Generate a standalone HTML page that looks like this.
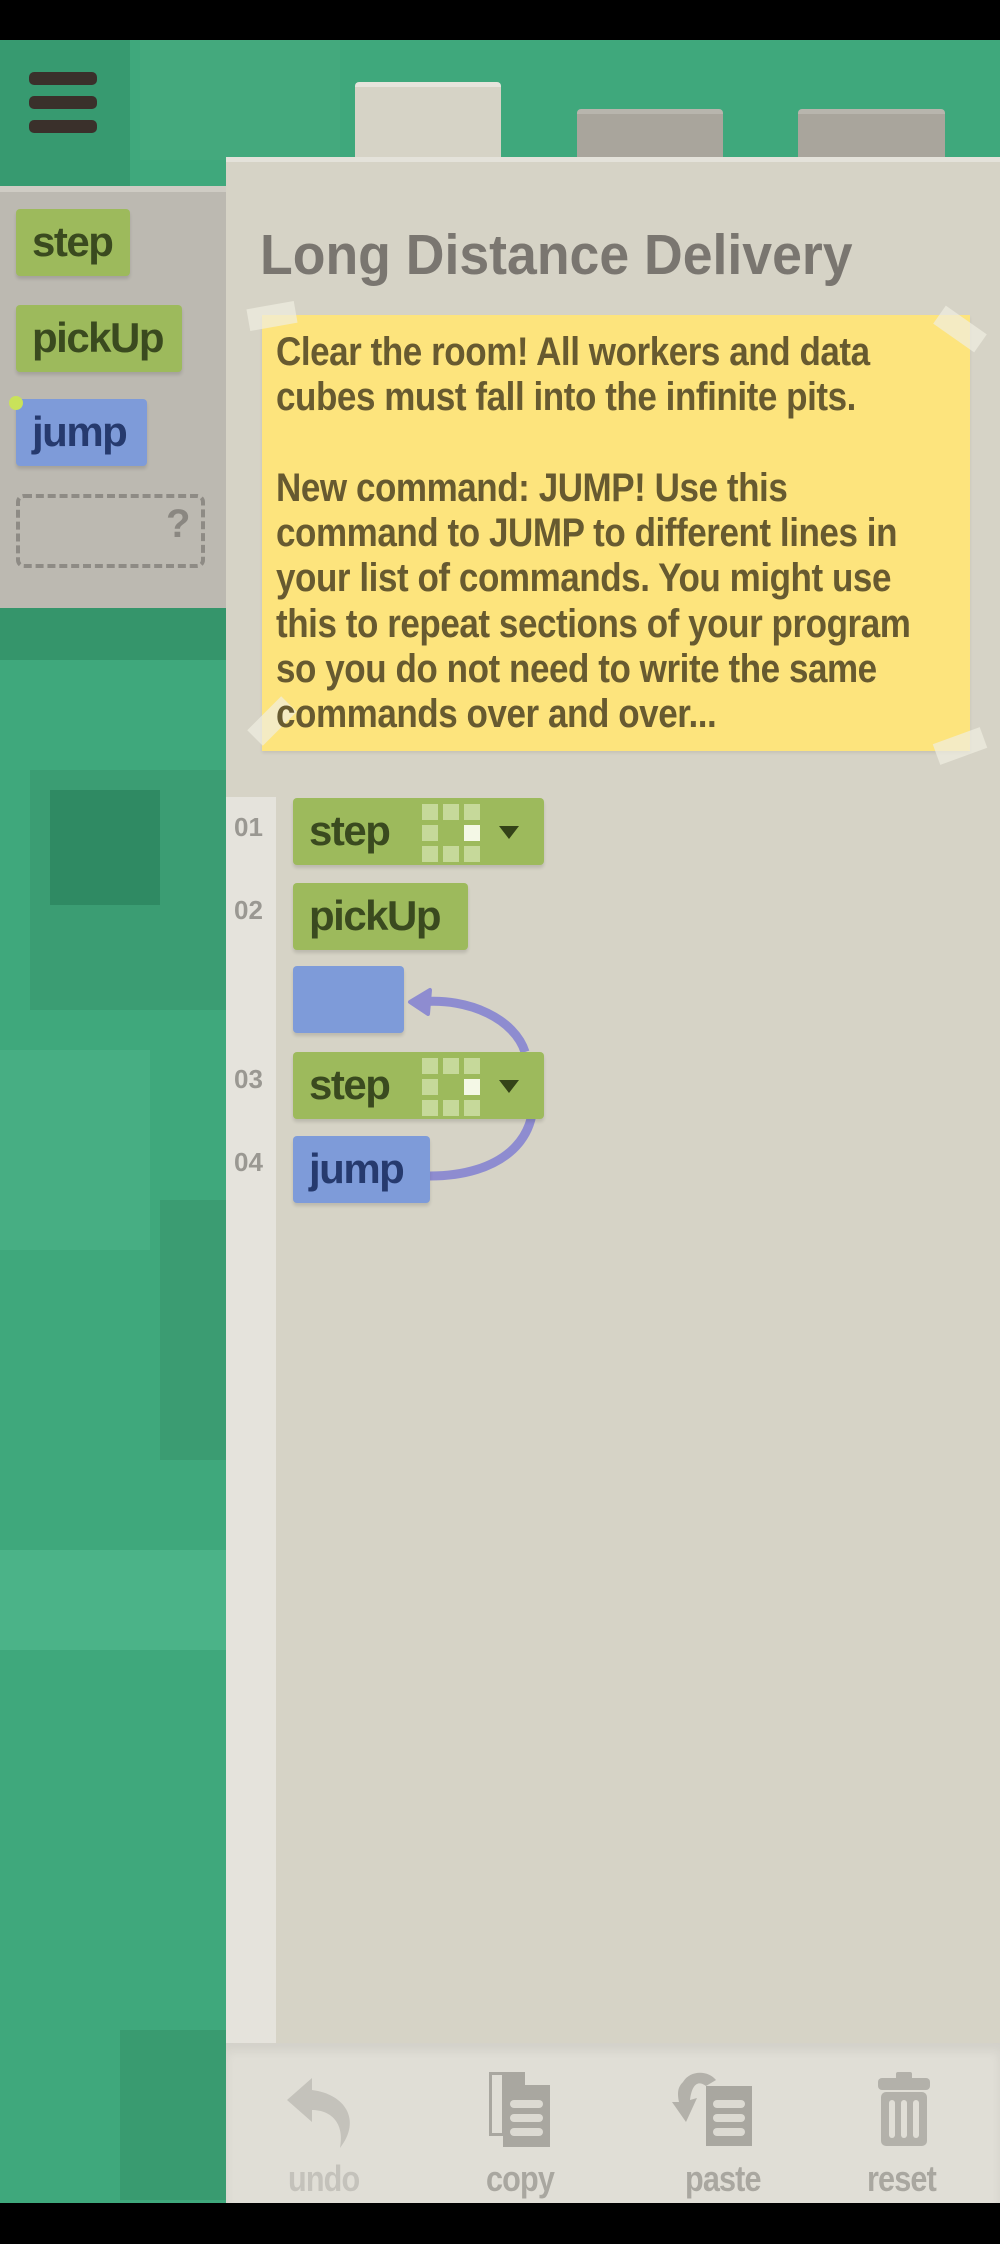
<!DOCTYPE html>
<html><head><meta charset="utf-8"><style>
*{margin:0;padding:0;box-sizing:border-box}
body{width:1000px;height:2244px;position:relative;overflow:hidden;background:#3fa87c;font-family:"Liberation Sans",sans-serif}
.a{position:absolute}
.blk{position:absolute;height:67px;border-radius:4px;font-weight:bold;font-size:42px;line-height:66px;padding-left:16px;letter-spacing:-1.5px;box-shadow:0 3px 3px rgba(0,0,0,.12)}
.g{background:#9dba5c;color:#3a4a1f}
.b{background:#7e9bd9;color:#263a6e}
.num{position:absolute;left:234px;font-size:26px;font-weight:bold;color:#9a9892}
.note{font-weight:bold;font-size:40px;color:#675a30;line-height:45.3px;white-space:nowrap;letter-spacing:-0.5px;transform:scaleX(0.875);transform-origin:0 0}
.lbl{position:absolute;top:2158px;font-size:36px;font-weight:bold;color:#a9a7a0;letter-spacing:-1px;transform:scaleX(0.85);transform-origin:0 0}
</style></head><body>
<div class="a" style="left:0;top:40px;width:130px;height:230px;background:#379a70"></div>
<div class="a" style="left:140px;top:40px;width:200px;height:120px;background:#44a97d"></div>
<div class="a" style="left:0;top:600px;width:230px;height:60px;background:#35956b"></div>
<div class="a" style="left:30px;top:770px;width:200px;height:240px;background:#3b9d73"></div>
<div class="a" style="left:50px;top:790px;width:110px;height:115px;background:#2f8a63"></div>
<div class="a" style="left:0;top:1050px;width:150px;height:200px;background:#47ae83"></div>
<div class="a" style="left:160px;top:1200px;width:70px;height:260px;background:#3b9c72"></div>
<div class="a" style="left:0;top:1550px;width:230px;height:100px;background:#4bb388"></div>
<div class="a" style="left:120px;top:2030px;width:110px;height:170px;background:#399b70"></div>
<div class="a" style="left:0;top:0;width:1000px;height:40px;background:#000"></div>
<div class="a" style="left:0;top:2203px;width:1000px;height:41px;background:#000"></div>
<div class="a" style="left:29px;top:72px;width:68px;height:13px;border-radius:5px;background:#3a302b"></div>
<div class="a" style="left:29px;top:96px;width:68px;height:13px;border-radius:5px;background:#3a302b"></div>
<div class="a" style="left:29px;top:120px;width:68px;height:13px;border-radius:5px;background:#3a302b"></div>
<div class="a" style="left:355px;top:82px;width:146px;height:80px;background:#d6d3c6;border-top:5px solid #e6e4dc;border-radius:4px 4px 0 0"></div>
<div class="a" style="left:577px;top:109px;width:146px;height:50px;background:#a9a59c;border-top:5px solid #b8b5ad;border-radius:4px 4px 0 0"></div>
<div class="a" style="left:798px;top:109px;width:147px;height:50px;background:#a9a59c;border-top:5px solid #b8b5ad;border-radius:4px 4px 0 0"></div>
<div class="a" style="left:0;top:186px;width:226px;height:422px;background:#bcb9b1;border-top:6px solid #cfccc4"></div>
<div class="blk g" style="left:16px;top:209px;width:114px">step</div>
<div class="blk g" style="left:16px;top:305px;width:166px">pickUp</div>
<div class="blk b" style="left:16px;top:399px;width:131px">jump</div>
<div class="a" style="left:9px;top:396px;width:14px;height:14px;border-radius:50%;background:#c9e25a"></div>
<div class="a" style="left:16px;top:494px;width:189px;height:74px;border:4px dashed #8e8b85;border-radius:8px"></div>
<div class="a" style="left:166px;top:502px;font-size:40px;font-weight:bold;color:#8a8781">?</div>
<div class="a" style="left:226px;top:157px;width:774px;height:2046px;background:#d6d3c6;border-top:5px solid #e4e2da"></div>
<div class="a" style="left:260px;top:222px;font-size:57px;font-weight:bold;color:#7a7670;white-space:nowrap;transform:scaleX(0.94);transform-origin:0 0">Long Distance Delivery</div>
<div class="a" style="left:262px;top:315px;width:708px;height:436px;background:#fde47d;box-shadow:0 2px 3px rgba(0,0,0,.08)"></div>
<div class="a" style="left:248px;top:305px;width:48px;height:22px;background:rgba(240,238,225,.7);transform:rotate(-10deg)"></div>
<div class="a" style="left:935px;top:318px;width:50px;height:22px;background:rgba(240,238,225,.7);transform:rotate(35deg)"></div>
<div class="a" style="left:248px;top:710px;width:48px;height:22px;background:rgba(240,238,225,.7);transform:rotate(-45deg)"></div>
<div class="a" style="left:935px;top:735px;width:50px;height:22px;background:rgba(240,238,225,.7);transform:rotate(-20deg)"></div>
<div class="a note" style="left:276px;top:330px">Clear the room! All workers and data<br>cubes must fall into the infinite pits.<br><br>New command: JUMP! Use this<br>command to JUMP to different lines in<br>your list of commands. You might use<br>this to repeat sections of your program<br>so you do not need to write the same<br>commands over and over...</div>
<div class="a" style="left:226px;top:797px;width:50px;height:1246px;background:#e5e3dc"></div>
<div class="num" style="top:812px">01</div>
<div class="num" style="top:895px">02</div>
<div class="num" style="top:1064px">03</div>
<div class="num" style="top:1147px">04</div>
<svg class="a" style="left:0;top:0" width="1000" height="2244">
<path d="M430 1176 C500 1176 540 1140 532 1090" fill="none" stroke="#8e8cd0" stroke-width="9"/>
<path d="M525 1052 C515 1020 470 997 420 1002" fill="none" stroke="#8e8cd0" stroke-width="9"/>
<path d="M410 1002 L430 990 L428 1014 Z" fill="#8e8cd0" stroke="#8e8cd0" stroke-width="4" stroke-linejoin="round"/>
</svg>
<div class="blk g" style="left:293px;top:798px;width:251px">step</div>
<div class="blk g" style="left:293px;top:883px;width:175px">pickUp</div>
<div class="blk b" style="left:293px;top:966px;width:111px"></div>
<div class="blk g" style="left:293px;top:1052px;width:251px">step</div>
<div class="blk b" style="left:293px;top:1136px;width:137px">jump</div>
<svg class="a" style="left:420px;top:802px" width="100" height="60">
<g fill="#c6d99a"><rect x="2" y="2" width="16" height="16"/><rect x="23" y="2" width="16" height="16"/><rect x="44" y="2" width="16" height="16"/><rect x="2" y="23" width="16" height="16"/><rect x="2" y="44" width="16" height="16"/><rect x="23" y="44" width="16" height="16"/><rect x="44" y="44" width="16" height="16"/></g>
<rect x="44" y="23" width="16" height="16" fill="#f4f8e6"/>
<path d="M79 24 L99 24 L89 37 Z" fill="#344318"/></svg>
<svg class="a" style="left:420px;top:1056px" width="100" height="60">
<g fill="#c6d99a"><rect x="2" y="2" width="16" height="16"/><rect x="23" y="2" width="16" height="16"/><rect x="44" y="2" width="16" height="16"/><rect x="2" y="23" width="16" height="16"/><rect x="2" y="44" width="16" height="16"/><rect x="23" y="44" width="16" height="16"/><rect x="44" y="44" width="16" height="16"/></g>
<rect x="44" y="23" width="16" height="16" fill="#f4f8e6"/>
<path d="M79 24 L99 24 L89 37 Z" fill="#344318"/></svg>
<div class="a" style="left:226px;top:2043px;width:774px;height:160px;background:#e0ded6;box-shadow:inset 0 8px 10px rgba(0,0,0,.06)"></div>
<svg class="a" style="left:0;top:2060px" width="1000" height="100">
<path d="M287 40 L312 18 L312 30 C345 34 362 60 340 88 C345 62 330 50 312 50 L312 62 Z" fill="#c4c2bb"/>
<rect x="489" y="12" width="36" height="64" fill="#a9a7a0"/>
<rect x="492" y="15" width="10" height="58" fill="#e0ded6"/>
<rect x="503" y="25" width="47" height="62" fill="#a9a7a0"/>
<g fill="#dcdad2"><rect x="510" y="40" width="33" height="8" rx="4"/><rect x="510" y="54" width="33" height="8" rx="4"/><rect x="510" y="68" width="33" height="8" rx="4"/></g>
<path d="M683 22 C690 10 708 10 716 20 L706 26 C698 20 692 24 690 40 L697 38 L686 62 L672 42 L679 42 C677 32 678 27 683 22Z" fill="#b3b1aa"/>
<rect x="706" y="26" width="46" height="60" fill="#a9a7a0"/>
<g fill="#dcdad2"><rect x="713" y="40" width="32" height="8" rx="4"/><rect x="713" y="54" width="32" height="8" rx="4"/><rect x="713" y="68" width="32" height="8" rx="4"/></g>
<rect x="878" y="18" width="52" height="12" rx="4" fill="#b3b1aa"/>
<rect x="896" y="12" width="16" height="8" rx="2" fill="#b3b1aa"/>
<rect x="881" y="32" width="46" height="54" rx="5" fill="#b3b1aa"/>
<g fill="#e0ded6"><rect x="889" y="40" width="6" height="38" rx="3"/><rect x="901" y="40" width="6" height="38" rx="3"/><rect x="913" y="40" width="6" height="38" rx="3"/></g>
</svg>
<div class="lbl" style="left:288px;color:#c4c2bb">undo</div>
<div class="lbl" style="left:486px">copy</div>
<div class="lbl" style="left:685px">paste</div>
<div class="lbl" style="left:867px">reset</div>
</body></html>
